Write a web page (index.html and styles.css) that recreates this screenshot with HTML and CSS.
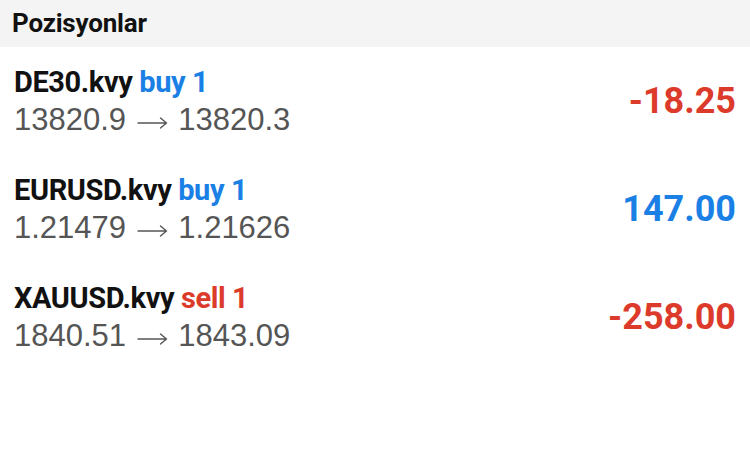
FILE: index.html
```html
<!DOCTYPE html>
<html lang="tr">
<head>
  <meta charset="utf-8">
  <title>Pozisyonlar</title>
  <link rel="stylesheet" href="styles.css">
</head>
<body>
  <div class="header">Pozisyonlar</div>

  <div class="positions">
    <div class="position">
      <div class="info">
        <div class="symbol">DE30.kvy <span class="buy">buy 1</span></div>
        <div class="prices">13820.9 <svg class="arrow" viewBox="0 0 31 12"><path d="M1 6H29.5M23.5 1L29.5 6L23.5 11"/></svg> 13820.3</div>
      </div>
      <div class="profit loss">-18.25</div>
    </div>

    <div class="position">
      <div class="info">
        <div class="symbol">EURUSD.kvy <span class="buy">buy 1</span></div>
        <div class="prices">1.21479 <svg class="arrow" viewBox="0 0 31 12"><path d="M1 6H29.5M23.5 1L29.5 6L23.5 11"/></svg> 1.21626</div>
      </div>
      <div class="profit gain">147.00</div>
    </div>

    <div class="position">
      <div class="info">
        <div class="symbol">XAUUSD.kvy <span class="sell">sell 1</span></div>
        <div class="prices">1840.51 <svg class="arrow" viewBox="0 0 31 12"><path d="M1 6H29.5M23.5 1L29.5 6L23.5 11"/></svg> 1843.09</div>
      </div>
      <div class="profit loss">-258.00</div>
    </div>
  </div>
</body>
</html>
```

FILE: styles.css
```css
html {
  height: 100%;
}

body {
  margin: 0;
  background-color: #fff;
  font-family: 'Liberation Sans', Arial, sans-serif;
  color: #111;
  -webkit-font-smoothing: antialiased;
}

.header {
  height: 47px;
  line-height: 47px;
  padding-left: 12px;
  background-color: #f4f4f4;
  font-family: 'Roboto', sans-serif;
  font-weight: 700;
  font-size: 26px;
  letter-spacing: -0.2px;
}

.position {
  display: flex;
  align-items: center;
  justify-content: space-between;
  height: 108px;
  padding: 0 14px;
}

.info {
  padding-top: 2px;
}

.symbol {
  font-family: 'Roboto', sans-serif;
  font-weight: 700;
  font-size: 29px;
  line-height: 36px;
  letter-spacing: -0.4px;
}

.prices {
  font-size: 31px;
  line-height: 40px;
  color: #555;
}

/* thin long arrow between open and current price */
.arrow {
  width: 31px;
  height: 12px;
  margin: 0 2px;
  vertical-align: 1px;
  fill: none;
  stroke: #555;
  stroke-width: 1.4;
  stroke-linecap: round;
  stroke-linejoin: round;
}

.profit {
  font-family: 'Roboto', sans-serif;
  font-weight: 700;
  font-size: 36px;
  letter-spacing: 0;
}

.buy,
.gain {
  color: #1a80e5;
}

.sell,
.loss {
  color: #dc3b2c;
}
```
